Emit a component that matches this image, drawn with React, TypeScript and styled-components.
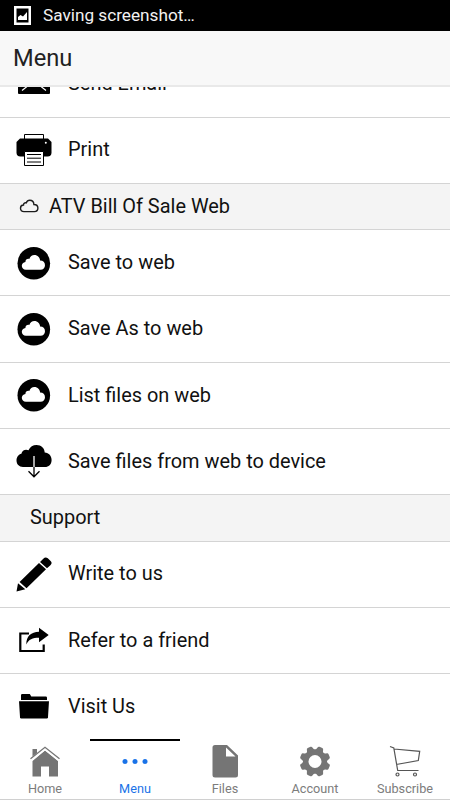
import React from 'react';
import styled, { createGlobalStyle } from 'styled-components';

const GlobalStyle = createGlobalStyle`
  * { box-sizing: border-box; }
  body { margin: 0; background: #fff; font-family: Roboto, sans-serif; color: #111; }
  svg { display: block; flex: none; }
`;

const Screen = styled.div`
  width: 450px;
  height: 800px;
  display: flex;
  flex-direction: column;
  overflow: hidden;
`;

const StatusBar = styled.div`
  flex: none;
  height: 31px;
  padding: 0 0 1px 14px;
  display: flex;
  align-items: center;
  gap: 12px;
  background: #000;
  color: #f2f2f2;
  font-size: 17.2px;
`;

const TitleBar = styled.header`
  flex: none;
  height: 56px;
  padding: 0 13px 1px;
  display: flex;
  align-items: center;
  background: #f8f8f8;
  border-bottom: 2px solid #e9e9e9;
  font-size: 23.7px;
  color: #222;
`;

const List = styled.main`
  flex: 1;
  min-height: 0;
  overflow: hidden;
`;

const Row = styled.div<{ $scrolled?: boolean }>`
  height: 66.25px;
  margin-top: ${(p) => (p.$scrolled ? '-35.75px' : '0')};
  padding: 0 0 0.4px 14px;
  display: flex;
  align-items: center;
  gap: 14px;
  border-bottom: 1px solid #d4d4d4;
  font-size: 19.93px;
`;

const IconSlot = styled.span`
  width: 40px;
  flex: none;
  display: flex;
  justify-content: center;
`;

const SectionRow = styled.div<{ $indent: number }>`
  height: 46.4px;
  padding-left: ${(p) => p.$indent}px;
  display: flex;
  align-items: center;
  gap: 10px;
  background: #f4f4f4;
  border-bottom: 1px solid #d4d4d4;
  font-size: 19.93px;
`;

const TabBar = styled.nav`
  flex: none;
  height: 61px;
  display: grid;
  grid-template-columns: repeat(5, 1fr);
  background: #fff;
  border-bottom: 1px solid #d0d0d0;
`;

const Tab = styled.div<{ $active?: boolean }>`
  display: flex;
  flex-direction: column;
  align-items: center;
  justify-content: space-between;
  padding: 3px 0 3px;
  border-top: 2px solid ${(p) => (p.$active ? '#000' : 'transparent')};
  color: ${(p) => (p.$active ? '#1a73e8' : '#7c7c7c')};
  font-size: 12.7px;
  line-height: 15px;
`;

const PictureIcon = () => (
  <svg width="17" height="19" viewBox="0 0 17 19">
    <path d="M1.250 1.250h14.500v16.500H1.250z" fill="none" stroke="#fff" strokeWidth="2.500" />
    <path d="M4 14V11l2.500-2 2.500 1.500L13 6v8z" fill="#fff" />
  </svg>
);

const MailIcon = () => (
  <svg width="32" height="21" viewBox="0 0 32 21">
    <rect width="32" height="21" rx="1" fill="#000" />
    <path d="M1 2l15 11L31 2M4 17.500l7.500-6M28 17.500l-7.500-6" fill="none" stroke="#fff" strokeWidth="1.200" />
  </svg>
);

const PrinterIcon = () => (
  <svg width="36" height="34" viewBox="0 0 36 34">
    <path d="M8.500 6V1.500h19V6" fill="#fff" stroke="#000" />
    <path d="M4 5.500h28l3.500 3.500v10.500q0 4-4 4h-27q-4 0-4-4V9z" fill="#000" />
    <circle cx="29.800" cy="9.800" r="1" fill="#fff" />
    <path d="M8.500 18.500h19v14h-19z" fill="#fff" stroke="#000" />
    <path d="M11 21.500h14M11 25.200h14M11 29h14" stroke="#000" />
  </svg>
);

const cloudShape =
  'M9 23.8C6.400 23.800 4.800 22 4.800 19.800C4.800 17.600 6.300 16.100 8.400 15.900C8.400 13.700 10.500 12.400 12.300 13C13.200 10.300 15 9 17.300 9C20.700 9 23 11.500 23.100 14.600C26.200 14.600 28 16.600 28 19.200C28 21.900 26.200 23.800 23.500 23.800Z';

const CloudDiscIcon = () => (
  <svg width="34" height="34" viewBox="0 0 34 34">
    <circle cx="16.800" cy="17.300" r="16.300" fill="#000" />
    <path d={cloudShape} fill="#fff" />
  </svg>
);

const CloudOutlineIcon = () => (
  <svg width="20" height="14" viewBox="0 0 20 14">
    <path
      d="M5 12.600C2.700 12.600 1.500 11.200 1.500 9.300S2.800 6.100 4.500 6C4.500 4.300 6 3.500 7.200 3.900C7.900 2.100 9.200 1.300 10.700 1.300C13.100 1.300 14.800 3.100 14.900 5.500C17.500 5.500 18.900 7.100 18.900 9.100C18.900 11.200 17.500 12.600 15.400 12.600Z"
      fill="none"
      stroke="#1c1c1c"
      strokeWidth="1.400"
    />
  </svg>
);

const CloudDownloadIcon = () => (
  <svg width="36" height="34" viewBox="0 0 36 34">
    <path
      d="M7 23C3 23 .5 20.300.5 16.600C.5 12.800 2.700 10.400 5.400 9.800C5.800 6.500 9.700 4.700 12.500 6.300C14 2.800 17 1 20.500 1C25.300 1 28.600 4.400 28.700 8.500C33 8.800 35.600 12 35.600 16C35.600 20.500 32.600 23 29 23Z"
      fill="#000"
    />
    <path d="M18 12v11" stroke="#fff" strokeWidth="1.300" />
    <path d="M18 23v9.500M12.500 27.300l5.500 5.500 5.500-5.500" fill="none" stroke="#000" strokeWidth="1.300" />
  </svg>
);

const PencilIcon = () => (
  <svg width="36" height="36" viewBox="0 0 36 36">
    <path
      d="M.5 35.500L2 27.200L9.300 33.200ZM3.600 25.900L23 7L30 13.300L10.500 32.300ZM24 6L27.300 2.700Q29.500.5 31.800 2.300L34.600 5Q36.700 7.200 34.400 9.300L31 12.300Z"
      fill="#000"
    />
  </svg>
);

const ShareIcon = () => (
  <svg width="30" height="26" viewBox="0 0 30 26">
    <path d="M10 6.500H1.300V24H24.700V17.500" fill="none" stroke="#000" strokeWidth="2.200" />
    <path d="M20 .8L29.700 8L20 15.200V10.800C13.500 10.800 9.800 12.300 7.300 17.500C7.300 9 12 5 20 4.700Z" fill="#000" />
  </svg>
);

const FolderIcon = () => (
  <svg width="30" height="26" viewBox="0 0 30 26">
    <path d="M2 7V2.200Q2 1 3.200 1h7.600l1.500 2.500h14.500Q28 3.500 28 4.700V7Z" fill="#000" />
    <path d="M0 8.200h30L29 24.300Q28.900 25.500 27.700 25.500H2.300Q1.100 25.500 1 24.300Z" fill="#000" />
  </svg>
);

const HomeIcon = () => (
  <svg width="36" height="36" viewBox="0 0 36 36" fill="#757575">
    <path d="M18 6.500L31 17V32.500H22V22.500H14V32.500H5.500V17Z" />
    <path d="M3.500 15.600L18 4L32.500 15.600" fill="none" stroke="#fff" strokeWidth="3.600" />
    <path d="M5.500 12.500V5H10V9Z" />
    <path d="M3.500 14.800L18 3.300L32.500 14.800" fill="none" stroke="#757575" strokeWidth="1.300" />
  </svg>
);

const DotsIcon = () => (
  <svg width="36" height="36" viewBox="0 0 36 36" fill="#1a73e8">
    <circle cx="8" cy="17.500" r="2.500" />
    <circle cx="18" cy="17.500" r="2.500" />
    <circle cx="28" cy="17.500" r="2.500" />
  </svg>
);

const FileIcon = () => (
  <svg width="36" height="36" viewBox="0 0 36 36">
    <path
      d="M8 1H20L31 11.500V31Q31 33.500 28.500 33.500H8Q5.500 33.500 5.500 31V3.500Q5.500 1 8 1ZM19 3.500V12.500H28.500Z"
      fill="#757575"
      fillRule="evenodd"
    />
  </svg>
);

const GearIcon = () => (
  <svg width="36" height="36" viewBox="0 0 36 36">
    <g fill="#757575" transform="translate(18 17.500)">
      <circle r="12" />
      {[22.5, 67.5, 112.5, 157.5, 202.5, 247.5, 292.5, 337.5].map((angle) => (
        <path
          key={angle}
          transform={`rotate(${angle})`}
          d="M-5-10.500Q-3.200-12-3-14Q-2.800-15.300-1.500-15.300H1.500Q2.800-15.300 3-14Q3.200-12 5-10.500Z"
        />
      ))}
      <circle r="6.500" fill="#fff" />
    </g>
  </svg>
);

const CartIcon = () => (
  <svg width="36" height="36" viewBox="0 0 36 36" fill="none" stroke="#555" strokeWidth="1.200">
    <path d="M3 2.500L6.800 4L10.700 26.500H31.500M7 5L32.700 7.300L31.300 16.500L9.300 20.500" />
    <circle cx="10.500" cy="30.500" r="1.500" />
    <circle cx="28" cy="30.500" r="1.500" />
  </svg>
);

const MenuRow = ({ icon, label, scrolled }: { icon: React.ReactNode; label: string; scrolled?: boolean }) => (
  <Row $scrolled={scrolled}>
    <IconSlot>{icon}</IconSlot>
    <span>{label}</span>
  </Row>
);

const tabs = [
  { label: 'Home', icon: <HomeIcon /> },
  { label: 'Menu', icon: <DotsIcon />, active: true },
  { label: 'Files', icon: <FileIcon /> },
  { label: 'Account', icon: <GearIcon /> },
  { label: 'Subscribe', icon: <CartIcon /> },
];

export default function App() {
  return (
    <>
      <GlobalStyle />
      <Screen>
        <StatusBar>
          <PictureIcon />
          <span>Saving screenshot…</span>
        </StatusBar>
        <TitleBar>Menu</TitleBar>
        <List>
          <MenuRow scrolled icon={<MailIcon />} label="Send Email" />
          <MenuRow icon={<PrinterIcon />} label="Print" />
          <SectionRow $indent={19}>
            <CloudOutlineIcon />
            <span>ATV Bill Of Sale Web</span>
          </SectionRow>
          <MenuRow icon={<CloudDiscIcon />} label="Save to web" />
          <MenuRow icon={<CloudDiscIcon />} label="Save As to web" />
          <MenuRow icon={<CloudDiscIcon />} label="List files on web" />
          <MenuRow icon={<CloudDownloadIcon />} label="Save files from web to device" />
          <SectionRow $indent={30}>Support</SectionRow>
          <MenuRow icon={<PencilIcon />} label="Write to us" />
          <MenuRow icon={<ShareIcon />} label="Refer to a friend" />
          <MenuRow icon={<FolderIcon />} label="Visit Us" />
        </List>
        <TabBar>
          {tabs.map((tab) => (
            <Tab key={tab.label} $active={tab.active}>
              {tab.icon}
              <span>{tab.label}</span>
            </Tab>
          ))}
        </TabBar>
      </Screen>
    </>
  );
}
